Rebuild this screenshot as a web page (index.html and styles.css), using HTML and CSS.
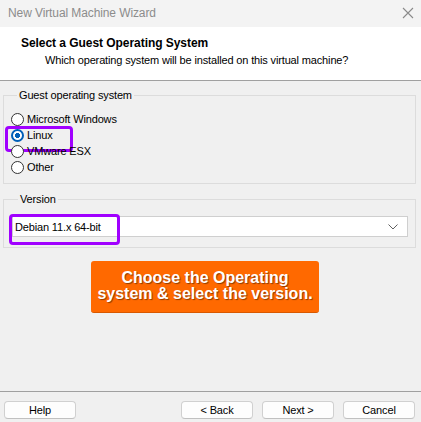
FILE: index.html
```html
<!DOCTYPE html>
<html>
<head>
<meta charset="utf-8">
<link rel="stylesheet" href="styles.css">
</head>
<body>
<div class="window">
  <div class="titlebar">
    <span class="title">New Virtual Machine Wizard</span>
    <svg class="close" width="12" height="12" viewBox="0 0 12 12"><path d="M1 1L11 11M11 1L1 11" stroke="#8a8a8a" stroke-width="1.1" fill="none"/></svg>
  </div>
  <div class="header">
    <div class="h-title">Select a Guest Operating System</div>
    <div class="h-sub">Which operating system will be installed on this virtual machine?</div>
  </div>
  <div class="content">
    <fieldset class="group group-os">
      <legend>Guest operating system</legend>
      <div class="radio"><span class="dot"></span><span>Microsoft Windows</span></div>
      <div class="radio checked marked"><span class="dot"></span><span>Linux</span></div>
      <div class="radio"><span class="dot"></span><span>VMware ESX</span></div>
      <div class="radio"><span class="dot"></span><span>Other</span></div>
    </fieldset>
    <fieldset class="group group-ver">
      <legend>Version</legend>
      <div class="select marked-sel">
        <span>Debian 11.x 64-bit</span>
        <svg class="chev" width="10" height="6" viewBox="0 0 10 6"><path d="M0.5 0.5L5 5L9.5 0.5" stroke="#606060" stroke-width="1" fill="none"/></svg>
      </div>
    </fieldset>
    <div class="callout">Choose the Operating<br>system &amp; select the version.</div>
  </div>
  <div class="footer">
    <button class="btn">Help</button>
    <div class="spacer"></div>
    <button class="btn">&lt; Back</button>
    <button class="btn">Next &gt;</button>
    <button class="btn">Cancel</button>
  </div>
</div>
</body>
</html>
```

FILE: styles.css
```css
* { box-sizing: border-box; }
html, body { margin: 0; padding: 0; }
body {
  width: 421px;
  height: 422px;
  overflow: hidden;
  font-family: "Liberation Sans", Arial, sans-serif;
  font-size: 11px;
  letter-spacing: -0.15px;
  color: #000;
  background: #f0f0f0;
}
.window {
  display: flex;
  flex-direction: column;
  height: 422px;
}
.titlebar {
  height: 27px;
  background: #f3f3f3;
  display: flex;
  align-items: center;
  justify-content: space-between;
  padding: 0 8px 2px 8px;
}
.title { color: #8c8c8c; font-size: 12px; letter-spacing: -0.1px; }
.close { margin-right: -1px; }
.header {
  height: 54px;
  background: #fff;
  border-bottom: 1px solid #a0a0a0;
  padding: 8px 0 0 21px;
}
.h-title { font-weight: 700; font-size: 12px; line-height: 16px; letter-spacing: -0.05px; }
.h-sub { line-height: 16px; padding-left: 24px; margin-top: 1px; }
.content {
  padding: 6px 5px 0 3px;
  display: flex;
  flex-direction: column;
}
.group {
  margin: 0;
  border: 1px solid #dcdcdc;
  padding: 0;
  min-width: 0;
}
.group legend {
  margin-left: 6px;
  padding: 0 2px;
  line-height: 16px;
}
.group-os { padding: 8px 7px 8px 7px; }
.radio {
  position: relative;
  display: flex;
  align-items: center;
  gap: 3px;
  height: 16px;
  line-height: 16px;
}
.dot {
  width: 13px;
  height: 13px;
  border-radius: 50%;
  border: 1px solid #333;
  background: #fff;
  flex: none;
}
.checked .dot {
  border: 2px solid #005fb8;
  background: radial-gradient(circle, #005fb8 0 2.3px, #fff 2.8px);
}
.marked::after {
  content: "";
  position: absolute;
  left: -6px;
  top: -1px;
  width: 62px;
  height: 20px;
  border: 3.5px solid #a000ff;
  border-radius: 4px;
}
.group-ver {
  margin-top: 7px;
  padding: 9px 7px 10px 8px;
}
.select {
  position: relative;
  height: 21px;
  background: #fff;
  border: 1px solid #cfcfcf;
  display: flex;
  align-items: center;
  justify-content: space-between;
  padding: 0 9px 0 2px;
}
.marked-sel::after {
  content: "";
  position: absolute;
  left: -4px;
  top: -3px;
  width: 105px;
  height: 25px;
  border: 3.5px solid #a000ff;
  border-radius: 4px;
}
.callout {
  margin: 13px 0 0 88px;
  width: 228px;
  height: 52px;
  background: #ff6900;
  border-radius: 3px;
  border-bottom: 1px solid #d85800;
  color: #fff;
  font-weight: 700;
  font-size: 16px;
  letter-spacing: 0;
  line-height: 16px;
  text-align: center;
  padding-top: 9px;
  text-shadow: 1px 1px 1px rgba(0,0,0,0.45);
}
.footer {
  margin-top: auto;
  height: 31px;
  border-top: 1px solid #a0a0a0;
  display: flex;
  gap: 9px;
  padding: 9px 6px 0 4px;
}
.spacer { flex: 1; }
.btn {
  width: 72px;
  height: 18px;
  font-family: inherit;
  font-size: 11px;
  letter-spacing: -0.15px;
  line-height: 14px;
  padding: 0;
  background: #fdfdfd;
  border: 1px solid #d0d0d0;
  border-bottom-color: #c0c0c0;
  border-radius: 4px;
  color: #000;
}
```
